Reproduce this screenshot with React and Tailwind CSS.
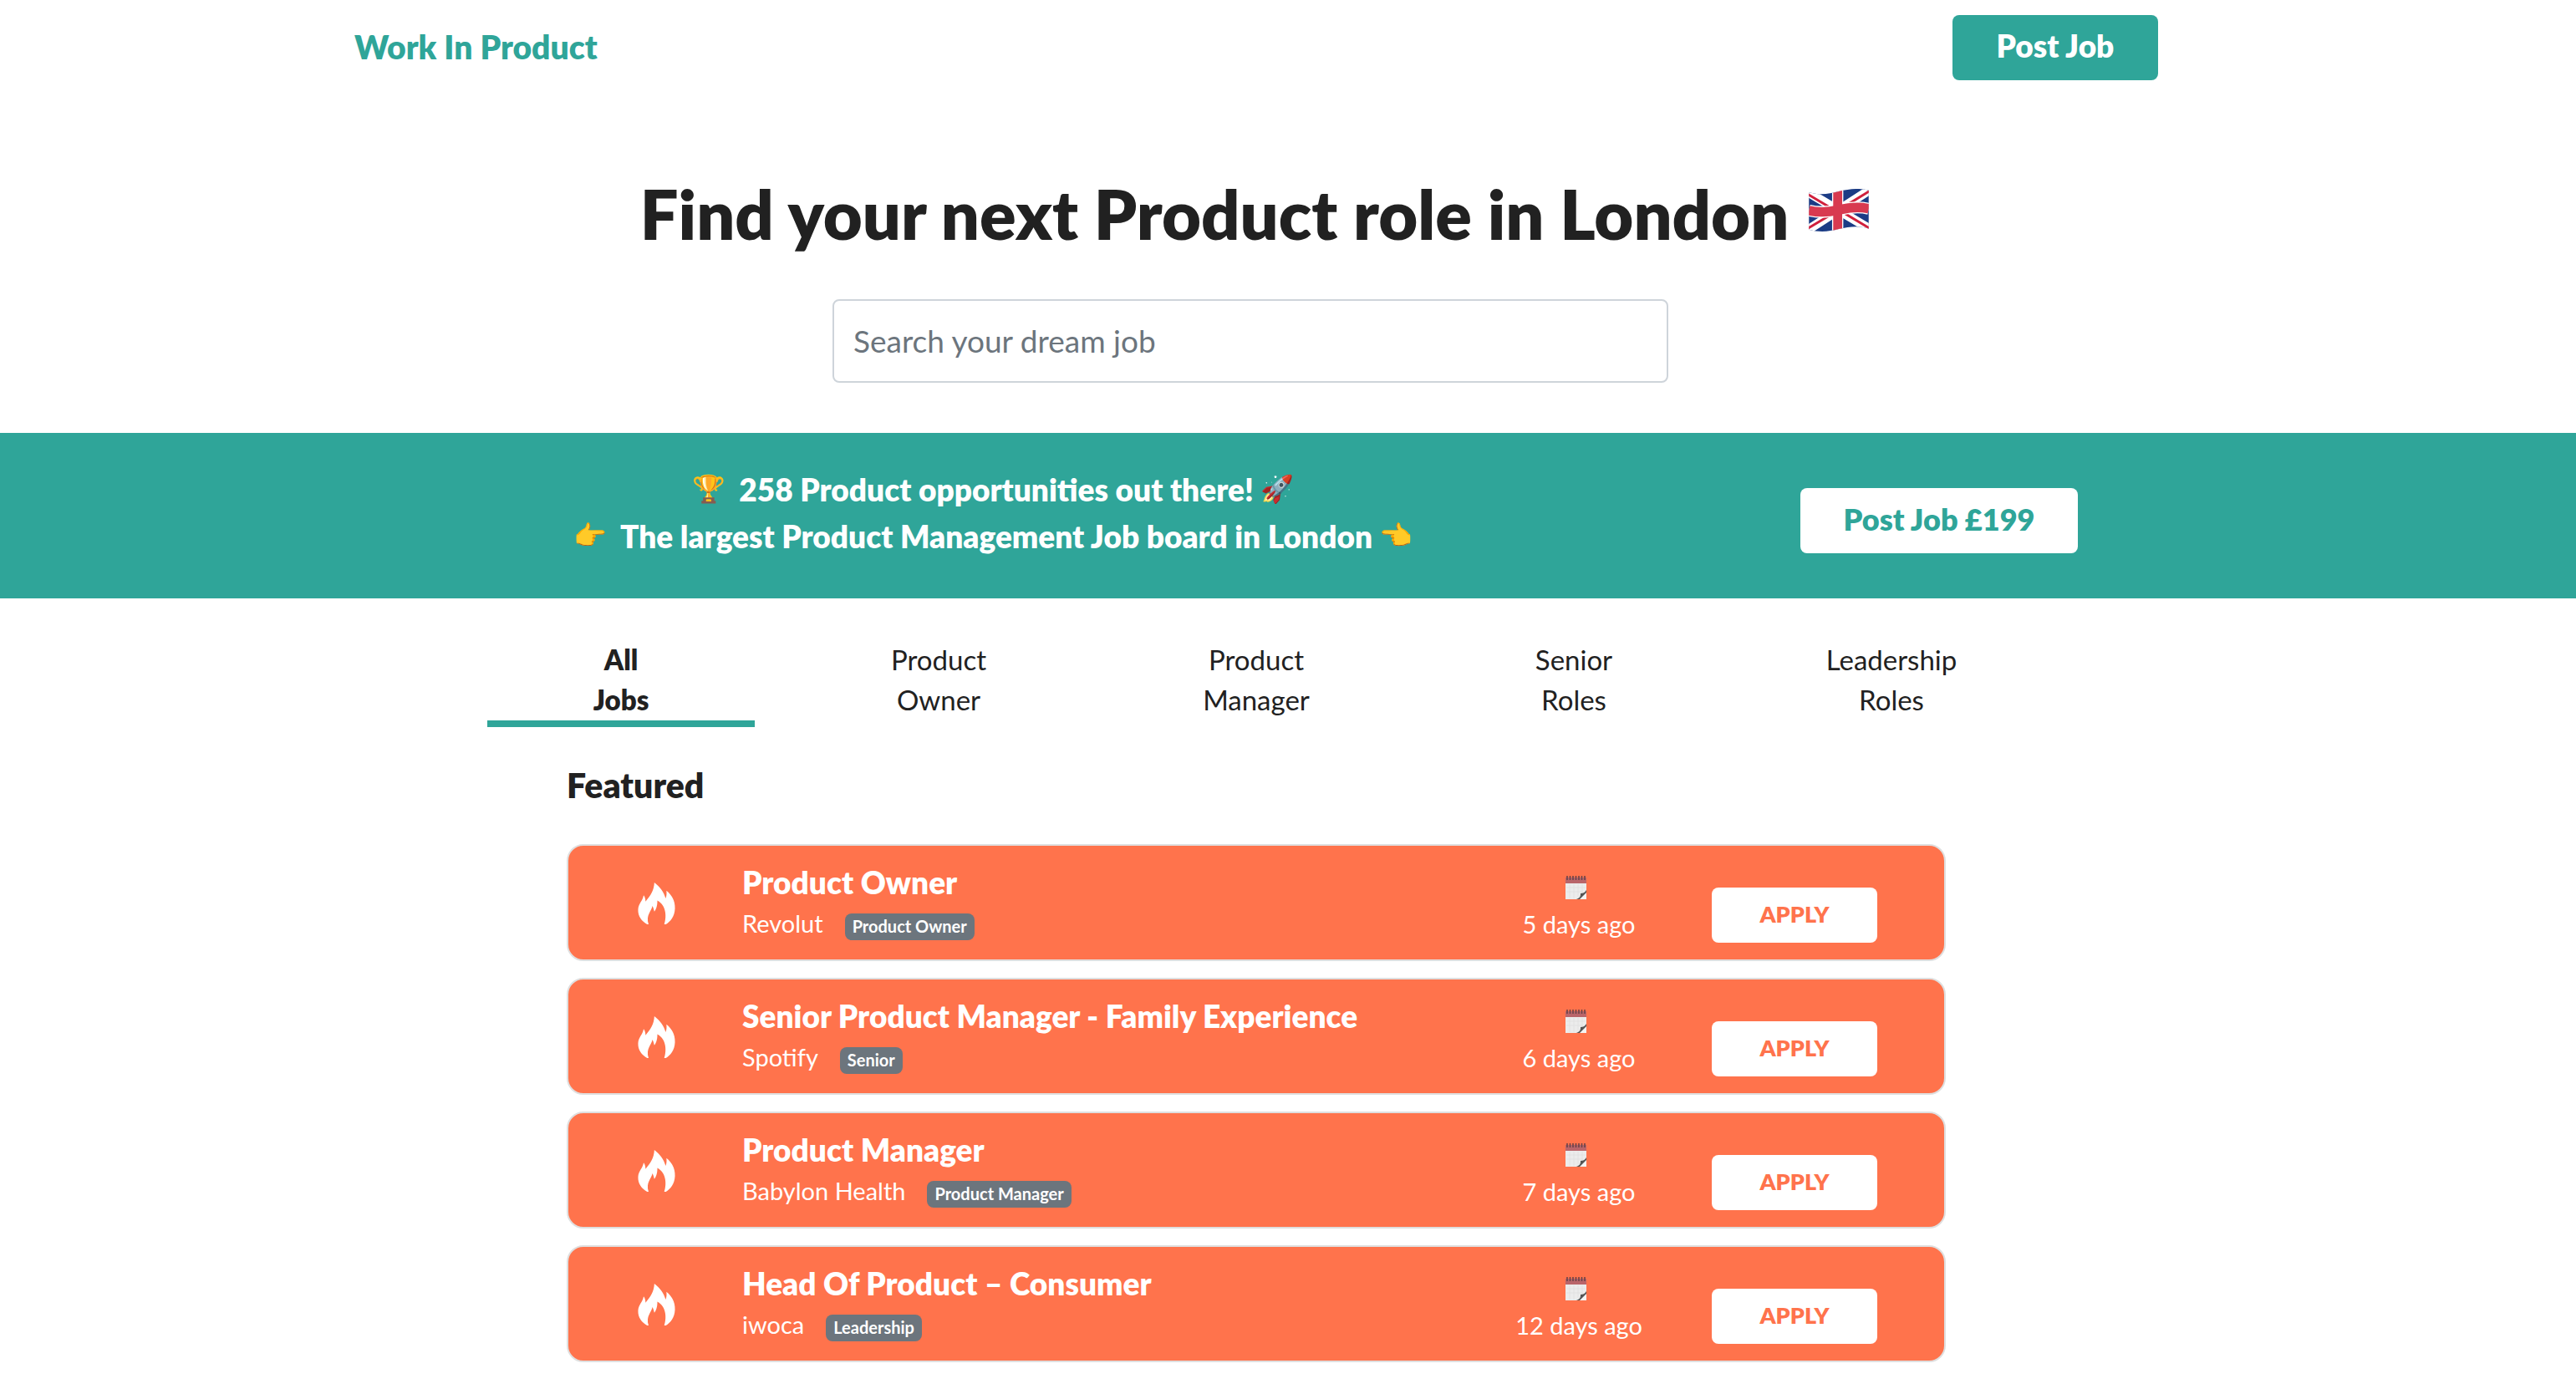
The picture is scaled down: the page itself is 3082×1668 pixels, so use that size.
// Work In Product: job board landing page
import { useState } from 'react';

const TABS = ['All Jobs', 'Product Owner', 'Product Manager', 'Senior Roles', 'Leadership Roles'];

const JOBS = [
  { title: 'Product Owner', company: 'Revolut', tag: 'Product Owner', posted: '5 days ago' },
  { title: 'Senior Product Manager - Family Experience', company: 'Spotify', tag: 'Senior', posted: '6 days ago' },
  { title: 'Product Manager', company: 'Babylon Health', tag: 'Product Manager', posted: '7 days ago' },
  { title: 'Head Of Product – Consumer', company: 'iwoca', tag: 'Leadership', posted: '12 days ago' },
];

function Flag() {
  return (
    <svg viewBox="0 0 214 152" className="w-[72px] h-[51px] mb-2.5" role="img" aria-label="United Kingdom">
      <clipPath id="flag">
        <path d="M0 12 C40 24 72 18 107 9 C145 0 180 -4 214 5 V142 C180 130 145 134 107 143 C72 152 40 156 0 145 Z" />
      </clipPath>
      <g clipPath="url(#flag)">
        <rect width="214" height="152" fill="#1b3c85" />
        <path d="M-6 10 L220 144 M-6 148 L220 2" stroke="#fff" strokeWidth="32" />
        <path d="M-2 20 L92 76 M122 84 L216 140 M-2 140 L92 84 M122 66 L216 8" stroke="#d0203c" strokeWidth="9" />
        <path d="M0 77 C40 87 72 83 107 75 C145 66 180 63 214 71" fill="none" stroke="#fff" strokeWidth="42" />
        <path d="M103 0 V152" stroke="#fff" strokeWidth="40" />
        <path d="M0 77 C40 87 72 83 107 75 C145 66 180 63 214 71" fill="none" stroke="#d83a50" strokeWidth="34" />
        <path d="M103 0 V152" stroke="#d83a50" strokeWidth="32" />
      </g>
    </svg>
  );
}

function Flame() {
  return (
    <svg viewBox="38 32 136 152" className="w-[45px] h-[50px] shrink-0" fill="#fff" aria-hidden="true">
      <path d="M98 32 C118 48 133 66 139 90 C143 82 143 72 142 62 C160 76 174 98 173 126 C172 156 156 174 140 184 H134 C142 160 144 116 109 97 C109 110 108 124 98 138 C96 130 95 124 91 117 C88 136 66 150 77 184 H72 C52 172 38 156 39 130 C40 108 56 98 59 78 C64 84 66 92 66 101 C84 80 97 60 98 32 Z" />
    </svg>
  );
}

function Calendar() {
  return (
    <svg viewBox="0 0 25 28" className="mr-2 w-[25px] h-7" aria-hidden="true">
      <rect y="2" width="25" height="26" fill="#ececec" />
      <rect y="2" width="25" height="7" fill="#b9656a" />
      <path d="M2 0 V5 M5.5 0 V5 M9 0 V5 M12.5 0 V5 M16 0 V5 M19.5 0 V5 M23 0 V5" stroke="#6b4347" strokeWidth="1.6" />
      <path d="M5 10 V27 M10 10 V27 M15 10 V25 M20 10 V20 M1 14 H24 M1 19 H21" stroke="#dedede" strokeWidth="0.6" />
      <path d="M13 28 C18 26 18 24 18 21 C21 21 23 20 25 17 V28 Z" fill="#555" />
      <path d="M17 28 L25 20 V28 Z" fill="#f4f4f4" />
    </svg>
  );
}

function JobCard({ job }) {
  return (
    <li className="flex items-start h-[140px] rounded-[20px] border-2 border-[#dfdfdf] bg-[#ff734c] pl-[83px] pr-20 text-white">
      <div className="pt-11">
        <Flame />
      </div>
      <div className="flex-1 pl-20 pt-[22px]">
        <h3 className="text-[37px] leading-[44px] font-extrabold">{job.title}</h3>
        <div className="flex items-center gap-[26px] h-[54px]">
          <span className="text-[29px]">{job.company}</span>
          <span className="mt-2 rounded-lg bg-[#6c757d] px-[9px] pb-0.5 text-[20px] leading-[30px] font-bold">
            {job.tag}
          </span>
        </div>
      </div>
      <div className="flex flex-col items-center w-[200px] pt-9">
        <Calendar />
        <span className="mt-3 text-[29px] leading-9">{job.posted}</span>
      </div>
      <button className="mt-[50px] ml-[59px] w-[198px] h-[66px] rounded-lg bg-white pb-0.5 text-[27px] font-extrabold text-[#ff734c]">
        APPLY
      </button>
    </li>
  );
}

export default function App() {
  const [tab, setTab] = useState(TABS[0]);

  return (
    <div className="min-h-screen bg-white font-['Lato',sans-serif] text-[#212121]">
      {/* Nav */}
      <header className="pr-[76px]">
        <nav className="mx-auto flex max-w-[2280px] items-center justify-between px-[61px] py-[18px]">
          <a href="#" className="pb-0.5 text-[39px] leading-[48px] font-extrabold text-[#2fa599]">
            Work In Product
          </a>
          <button className="w-[246px] h-[78px] rounded-lg bg-[#2fa599] pb-1 text-[37px] font-extrabold text-white">
            Post Job
          </button>
        </nav>
      </header>

      {/* Hero */}
      <section className="flex flex-col items-center pt-[94px] pb-[60px] pr-20">
        <h1 className="flex items-center gap-6 text-[81px] leading-[96px] font-extrabold">
          Find your next Product role in London
          <Flag />
        </h1>
        <div className="mt-[54px] w-full max-w-[1010px] pr-2.5">
          <input
            type="search"
            aria-label="Search your dream job"
            placeholder="Search your dream job"
            className="block w-full h-[100px] rounded-lg border-2 border-[#ced4da] px-[23px] pb-0.5 text-[37px] placeholder:text-[#6c757d]"
          />
        </div>
      </section>

      {/* Banner */}
      <section className="bg-[#2fa599] pr-[76px]">
        <div className="mx-auto flex max-w-[2280px] items-center justify-between pl-[65px] pr-[157px] pt-10 pb-[46px]">
          <div className="w-[1520px] text-[37px] leading-[56px] font-extrabold text-white">
            <p className="flex items-center justify-center gap-2">
              <span className="mr-2 pb-1 text-[32px] leading-[52px]">🏆</span>
              258 Product opportunities out there!
              <span className="pb-1 text-[32px] leading-[52px]">🚀</span>
            </p>
            <p className="flex items-center justify-center gap-2">
              <span className="mr-2 pb-1 text-[32px] leading-[52px]">👉</span>
              The largest Product Management Job board in London
              <span className="pb-1 text-[32px] leading-[52px]">👈</span>
            </p>
          </div>
          <button className="mt-[18px] w-[332px] h-[78px] rounded-lg bg-white pb-1 text-[36px] font-extrabold text-[#2fa599]">
            Post Job £199
          </button>
        </div>
      </section>

      <main className="pr-[76px] pb-10">
        {/* Role filter */}
        <div className="mx-auto grid max-w-[1840px] grid-cols-5 gap-[60px] pt-[49px]">
          {TABS.map((name) => (
            <button
              key={name}
              onClick={() => setTab(name)}
              className={`border-b-8 pb-px text-[33px] leading-[48px] ${
                tab === name ? 'border-[#2fa599] font-extrabold' : 'border-transparent'
              }`}
            >
              {name.split(' ').map((word) => (
                <span key={word} className="block">{word}</span>
              ))}
            </button>
          ))}
        </div>

        <section className="mx-auto max-w-[1650px]">
          <h2 className="pt-[46px] text-[41px] leading-[48px] font-extrabold">Featured</h2>
          <ul className="mt-[46px] flex flex-col gap-5">
            {JOBS.map((job) => (
              <JobCard key={job.title} job={job} />
            ))}
          </ul>
        </section>
      </main>
    </div>
  );
}
